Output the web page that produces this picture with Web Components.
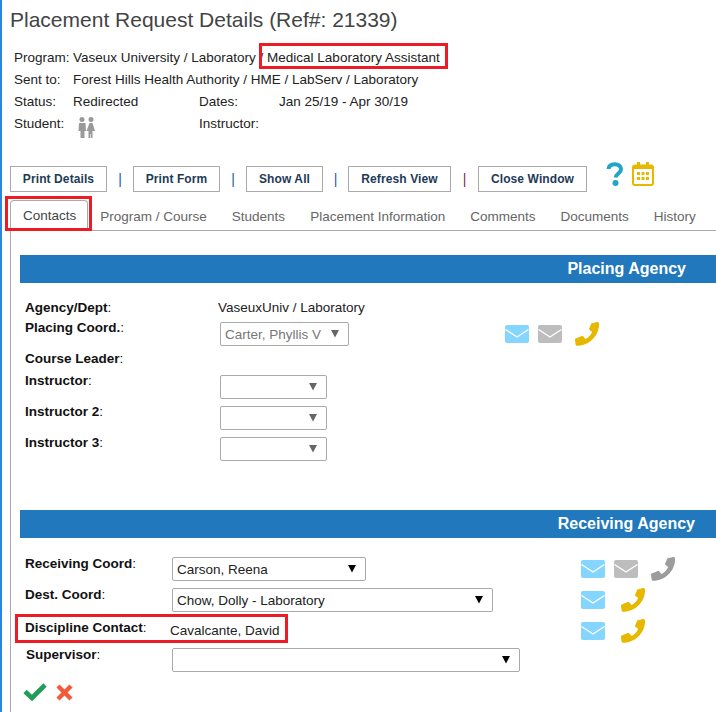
<!DOCTYPE html>
<html>
<head>
<meta charset="utf-8">
<title>Placement Request Details</title>
<style>
  html, body { margin: 0; height: 712px; overflow: hidden; background: #fff; }
  body { font: 13.5px "Liberation Sans", Arial, sans-serif; color: #222; }
</style>
</head>
<body>

<request-page>
  <page-title>Placement Request Details (Ref#: 21339)</page-title>

  <info-block>
    <info-row label="Program:">Vaseux University / Laboratory / Medical Laboratory Assistant</info-row>
    <info-row label="Sent to:">Forest Hills Health Authority / HME / LabServ / Laboratory</info-row>
    <info-row label="Status:" label2="Dates:" value2="Jan 25/19 - Apr 30/19">Redirected</info-row>
    <info-row label="Student:" label2="Instructor:"><ui-icon name="people" style="margin:8px 0 0 5px"></ui-icon></info-row>
  </info-block>

  <tool-bar>
    <tool-button style="width:97px">Print Details</tool-button>
    <tool-sep>|</tool-sep>
    <tool-button style="width:87px">Print Form</tool-button>
    <tool-sep>|</tool-sep>
    <tool-button style="width:77px">Show All</tool-button>
    <tool-sep style="width:25px">|</tool-sep>
    <tool-button style="width:103px">Refresh View</tool-button>
    <tool-sep style="width:27px;color:#8a1c5c">|</tool-sep>
    <tool-button style="width:109px">Close Window</tool-button>
    <ui-icon name="help" style="margin:-4px 0 0 19px"></ui-icon>
    <ui-icon name="calendar" style="margin:-4px 0 0 8px"></ui-icon>
  </tool-bar>

  <tab-bar>
    <tab-item active>Contacts</tab-item>
    <tab-item>Program / Course</tab-item>
    <tab-item>Students</tab-item>
    <tab-item>Placement Information</tab-item>
    <tab-item>Comments</tab-item>
    <tab-item>Documents</tab-item>
    <tab-item>History</tab-item>
  </tab-bar>

  <tab-body>
    <agency-panel title="Placing Agency" style="--end:30px;--label-w:195px;--ctl-w:285px">
      <form-row label="Agency/Dept" style="--h:20px;--l:0px;--c:0px"><field-value>VaseuxUniv / Laboratory</field-value></form-row>
      <form-row label="Placing Coord." style="--h:31px;--l:0px;--c:5px">
        <select-box width="129" muted>Carter, Phyllis V</select-box>
        <ui-icon slot="icons" name="mail"></ui-icon>
        <ui-icon slot="icons" name="mail" tone="gray" style="margin-left:9px"></ui-icon>
        <ui-icon slot="icons" name="phone" style="margin-left:13px"></ui-icon>
      </form-row>
      <form-row label="Course Leader" style="--h:21px;--l:0px;--c:0px"></form-row>
      <form-row label="Instructor" style="--h:31px;--l:1px;--c:6px"><select-box width="107" muted></select-box></form-row>
      <form-row label="Instructor 2" style="--h:31px;--l:1px;--c:6px"><select-box width="107" muted></select-box></form-row>
      <form-row label="Instructor 3" style="--h:31px;--l:1px;--c:6px"><select-box width="107" muted></select-box></form-row>
    </agency-panel>

    <agency-panel title="Receiving Agency" style="--end:21px;--label-w:147px;--ctl-w:409px;--top:15px;--gap-top:48px">
      <form-row label="Receiving Coord" style="--h:31px;--l:0px;--c:4px">
        <select-box width="194">Carson, Reena</select-box>
        <ui-icon slot="icons" name="mail"></ui-icon>
        <ui-icon slot="icons" name="mail" tone="gray" style="margin-left:9px"></ui-icon>
        <ui-icon slot="icons" name="phone" tone="gray" style="margin-left:13px"></ui-icon>
      </form-row>
      <form-row label="Dest. Coord" style="--h:31px;--l:0px;--c:4px">
        <select-box width="321">Chow, Dolly - Laboratory</select-box>
        <ui-icon slot="icons" name="mail"></ui-icon>
        <ui-icon slot="icons" name="phone" style="margin-left:16px"></ui-icon>
      </form-row>
      <form-row label="Discipline Contact" style="--h:29px;--l:2px;--c:5px;--i:4px">
        <field-value>Cavalcante, David</field-value>
        <ui-icon slot="icons" name="mail"></ui-icon>
        <ui-icon slot="icons" name="phone" style="margin-left:16px"></ui-icon>
      </form-row>
      <form-row label="Supervisor" style="--h:33px;--l:0px;--c:4px;--nudge:1px"><select-box width="348"></select-box></form-row>
      <form-actions>
        <ui-icon name="check"></ui-icon>
        <ui-icon name="cross" style="margin-left:9px"></ui-icon>
      </form-actions>
    </agency-panel>
  </tab-body>

  <mark-box style="left:257px;top:43px;width:189px;height:26px"></mark-box>
  <mark-box style="left:3px;top:196px;width:87px;height:35px"></mark-box>
  <mark-box style="left:13px;top:614px;width:273px;height:29px"></mark-box>
</request-page>

<script>
  // small helper so each element just lists its own markup
  class Base extends HTMLElement {
    constructor() {
      super();
      this.attachShadow({ mode: 'open' });
    }
    connectedCallback() {
      this.shadowRoot.innerHTML = this.markup();
    }
  }

  class RequestPage extends Base {
    markup() {
      return `<style>
        :host { display: block; position: relative; box-sizing: border-box; height: 712px; overflow: hidden;
                border-left: 2px solid #2a88dc; padding-left: 8px; }
      </style><slot></slot>`;
    }
  }

  class PageTitle extends Base {
    markup() {
      return `<style>
        :host { display: block; height: 46px; padding-top: 7px; box-sizing: border-box;
                font-size: 21px; line-height: 26px; color: #444; }
      </style><slot></slot>`;
    }
  }

  class InfoBlock extends Base {
    markup() {
      return `<style>:host { display: block; padding-left: 4px; height: 120px; }</style><slot></slot>`;
    }
  }

  class InfoRow extends Base {
    markup() {
      const l2 = this.getAttribute('label2') || '';
      const v2 = this.getAttribute('value2') || '';
      return `<style>
        :host { display: grid; grid-template-columns: 59px 126px 80px 1fr; grid-template-rows: 22px; height: 22px;
                align-items: center; color: #222; white-space: nowrap; }
        .main { display: flex; align-items: flex-start; }
      </style>
      <span>${this.getAttribute('label')}</span>
      <span class="main"><slot></slot></span>
      <span>${l2}</span>
      <span>${v2}</span>`;
    }
  }

  class ToolBar extends Base {
    markup() {
      return `<style>:host { display: flex; align-items: flex-start; height: 34px; }</style><slot></slot>`;
    }
  }

  class ToolButton extends Base {
    markup() {
      return `<style>
        :host { display: block; box-sizing: border-box; flex: none; height: 26px; border: 1px solid #aaa;
                font-size: 12px; font-weight: bold; letter-spacing: .1px; line-height: 24px; text-align: center;
                color: #1d3b58; white-space: nowrap; }
      </style><slot></slot>`;
    }
  }

  class ToolSep extends Base {
    markup() {
      return `<style>
        :host { display: block; flex: none; width: 26px; text-align: center; font-size: 14px; line-height: 26px; color: #17609f; }
      </style><slot></slot>`;
    }
  }

  class TabBar extends Base {
    markup() {
      return `<style>
        :host { display: flex; height: 31px; box-sizing: border-box; border-bottom: 1px solid #aaa; }
      </style><slot></slot>`;
    }
  }

  class TabItem extends Base {
    markup() {
      return `<style>
        :host { display: block; box-sizing: border-box; height: 30px; padding: 1px 12.5px 0;
                line-height: 32px; color: #666; white-space: nowrap; }
        :host([active]) { height: 31px; padding: 0 10.5px 0 12px; line-height: 29px; color: #444; background: #fff;
                border: 1px solid #aaa; border-bottom: 0; border-radius: 4px 4px 0 0; }
      </style><slot></slot>`;
    }
  }

  class TabBody extends Base {
    markup() {
      return `<style>
        :host { display: block; border-left: 1px solid #aaa; padding: 24px 0 0 9px; height: 480px; }
      </style><slot></slot>`;
    }
  }

  class AgencyPanel extends Base {
    markup() {
      return `<style>
        :host { display: block; margin-top: var(--gap-top, 0); }
        header { height: 28px; background: #2178bc; color: #fff; font-size: 16px; font-weight: bold;
                 line-height: 27px; text-align: right; padding-right: var(--end); }
        .rows { padding: var(--top, 14px) 0 0 5px; }
      </style>
      <header>${this.getAttribute('title')}</header>
      <div class="rows"><slot></slot></div>`;
    }
  }

  class FormRow extends Base {
    markup() {
      return `<style>
        :host { display: grid; grid-template-columns: var(--label-w) var(--ctl-w) 1fr; height: var(--h); line-height: 22px; }
        .label { padding-top: var(--l); padding-left: var(--nudge, 0); color: #111; white-space: nowrap; }
        b { font-weight: bold; }
        .ctl { padding-top: var(--c); }
        .icons { display: flex; align-items: center; height: 23px; margin-top: var(--i, var(--c)); }
      </style>
      <div class="label"><b>${this.getAttribute('label')}</b>:</div>
      <div class="ctl"><slot></slot></div>
      <div class="icons"><slot name="icons"></slot></div>`;
    }
  }

  class FieldValue extends Base {
    markup() {
      return `<style>:host { display: block; margin-left: -2px; color: #222; white-space: nowrap; }</style><slot></slot>`;
    }
  }

  class SelectBox extends Base {
    markup() {
      const muted = this.hasAttribute('muted');
      return `<style>
        :host { display: block; box-sizing: border-box; position: relative; height: 24px;
                width: ${this.getAttribute('width')}px; padding-left: 4px; border: 1px solid #aaa; border-radius: 2px;
                line-height: 24px; white-space: nowrap; color: ${muted ? '#777' : '#222'}; background: #fff; }
        svg { position: absolute; right: 9px; top: 7px; }
      </style><slot></slot>
      <svg width="8" height="8" viewBox="0 0 8 8"><path d="M0 0h8L4 7.5z" fill="${muted ? '#666' : '#000'}"/></svg>`;
    }
  }

  class FormActions extends Base {
    markup() {
      return `<style>:host { display: flex; align-items: center; height: 30px; margin-left: -2px; }</style><slot></slot>`;
    }
  }

  class MarkBox extends Base {
    markup() {
      return `<style>
        :host { display: block; position: absolute; box-sizing: border-box; border: 3px solid #ed1c24; pointer-events: none; }
      </style>`;
    }
  }

  const GOLD = '#e6b800';
  const PHONE = 'M17.2 1.2 22 0c1.2-.2 1.8.4 2 1.4.6 11.6-9.4 22-21.6 22.4-1 0-1.6-.5-1.8-1.3L0 18c-.1-.7.1-1.1.7-1.4l6.2-2.6c.5-.2 1-.1 1.4.4l2.2 2.5c3.2-1.6 5.2-3.8 6.6-7l-2.7-2.2c-.4-.4-.5-.8-.3-1.3l2.7-5.7c.2-.3.3-.4.4-.5z';

  const ICONS = {
    mail: tone => `<svg width="24" height="18" viewBox="0 0 24 18" style="display:block">
      <rect width="24" height="18" rx="2" fill="${tone === 'gray' ? '#bdbdbd' : '#84d5ff'}"/>
      <path d="M.5 4.5 12 12 23.5 4.5" fill="none" stroke="#fff" stroke-width="1.4"/></svg>`,
    phone: tone => `<svg width="24" height="24" viewBox="0 0 24 24" style="display:block"><path d="${PHONE}" fill="${tone === 'gray' ? '#9c9c9c' : GOLD}"/></svg>`,
    help: () => `<svg width="18" height="24" viewBox="0 0 18 24" style="display:block">
      <path d="M2.6 7C2.800 3.700 5.500 2.300 8.800 2.300c3.600 0 6.200 1.900 6.200 4.900 0 4.300-5.200 4.200-5.200 8.300" fill="none" stroke="#1ea6c6" stroke-width="4"/>
      <circle cx="9.500" cy="21" r="3" fill="#1ea6c6"/></svg>`,
    calendar: () => `<svg width="22" height="24" viewBox="0 0 22 24" style="display:block">
      <rect x="1" y="3.500" width="20" height="19.500" rx="2" fill="#fff" stroke="${GOLD}" stroke-width="2"/>
      <rect x="1" y="3.500" width="20" height="3.500" fill="${GOLD}"/>
      <rect x="5" y="0" width="3" height="5" fill="${GOLD}"/><rect x="14" y="0" width="3" height="5" fill="${GOLD}"/>
      <path d="M5 10h3v3H5zM9.500 10h3v3h-3zM14 10h3v3h-3zM5 15h3v3H5zM9.500 15h3v3h-3zM14 15h3v3h-3z" fill="${GOLD}"/></svg>`,
    people: () => `<svg width="17" height="21" viewBox="0 0 17 21" style="display:block" fill="#999">
      <circle cx="4" cy="2.500" r="2.500"/><circle cx="13" cy="2.500" r="2.500"/>
      <path d="M1 6h6.500l.5 8H6.500v7H2.500v-7H.5z"/>
      <path d="M11.500 6h3L17 14h-2.500v7h-1.700v-4h-.6v4H10.500v-7H8.500z"/></svg>`,
    check: () => `<svg width="24" height="18" viewBox="0 0 24 18" style="display:block">
      <path d="M2 8.500 9 15 22 2" fill="none" stroke="#1f9d57" stroke-width="4.600"/></svg>`,
    cross: () => `<svg width="17" height="17" viewBox="0 0 17 17" style="display:block">
      <path d="M2 2 15 15M15 2 2 15" fill="none" stroke="#f4593a" stroke-width="4.400"/></svg>`
  };

  class UiIcon extends Base {
    markup() {
      return `<style>:host { display: block; line-height: 0; flex: none; }</style>` +
        ICONS[this.getAttribute('name')](this.getAttribute('tone'));
    }
  }

  customElements.define('request-page', RequestPage);
  customElements.define('page-title', PageTitle);
  customElements.define('info-block', InfoBlock);
  customElements.define('info-row', InfoRow);
  customElements.define('tool-bar', ToolBar);
  customElements.define('tool-button', ToolButton);
  customElements.define('tool-sep', ToolSep);
  customElements.define('tab-bar', TabBar);
  customElements.define('tab-item', TabItem);
  customElements.define('tab-body', TabBody);
  customElements.define('agency-panel', AgencyPanel);
  customElements.define('form-row', FormRow);
  customElements.define('field-value', FieldValue);
  customElements.define('select-box', SelectBox);
  customElements.define('form-actions', FormActions);
  customElements.define('mark-box', MarkBox);
  customElements.define('ui-icon', UiIcon);
</script>
</body>
</html>
